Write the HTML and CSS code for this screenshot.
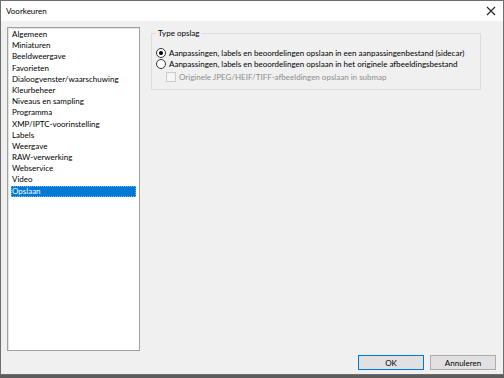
FILE: index.html
```html
<!DOCTYPE html>
<html lang="nl">
<head>
  <meta charset="UTF-8">
  <meta name="viewport" content="width=device-width, initial-scale=1.0">
  <title>Voorkeuren</title>
  <link rel="stylesheet" href="styles.css">
</head>
<body>
  <div class="window">
    <div class="titlebar">
      <span class="title">Voorkeuren</span>
      <svg class="close" width="10" height="10" viewBox="0 0 10 10">
        <path d="M1 1L9 9M9 1L1 9" stroke="#222" stroke-width="1.1"/>
      </svg>
    </div>
    <div class="content">
      <ul class="category-list">
        <li>Algemeen</li>
        <li>Miniaturen</li>
        <li>Beeldweergave</li>
        <li>Favorieten</li>
        <li>Dialoogvenster/waarschuwing</li>
        <li>Kleurbeheer</li>
        <li>Niveaus en sampling</li>
        <li>Programma</li>
        <li>XMP/IPTC-voorinstelling</li>
        <li>Labels</li>
        <li>Weergave</li>
        <li>RAW-verwerking</li>
        <li>Webservice</li>
        <li>Video</li>
        <li class="selected">Opslaan</li>
      </ul>
      <div class="panel">
        <fieldset class="group">
          <legend>Type opslag</legend>
          <label class="option">
            <span class="radio checked"></span>
            Aanpassingen, labels en beoordelingen opslaan in een aanpassingenbestand (sidecar)
          </label>
          <label class="option">
            <span class="radio"></span>
            Aanpassingen, labels en beoordelingen opslaan in het originele afbeeldingsbestand
          </label>
          <label class="option sub disabled">
            <span class="checkbox"></span>
            Originele JPEG/HEIF/TIFF-afbeeldingen opslaan in submap
          </label>
        </fieldset>
      </div>
    </div>
    <div class="footer">
      <button class="btn default">OK</button>
      <button class="btn">Annuleren</button>
    </div>
  </div>
</body>
</html>
```

FILE: styles.css
```css
body {
  margin: 0;
  background: #5c5c5c;
  font-family: Lato, "Noto Sans", sans-serif;
  font-size: 8px;
  color: #000;
}

.window {
  width: 502px;
  height: 373px;
  border: 1px solid #6e6e6e;
  background: #f0f0f0;
  display: flex;
  flex-direction: column;
}

.titlebar {
  height: 20px;
  background: #fff;
  display: flex;
  align-items: center;
  justify-content: space-between;
  padding: 0 6px 0 5px;
}

.title {
  font-size: 8px;
}

.close {
  margin-right: 1px;
}

.content {
  flex: 1;
  display: flex;
  padding: 6px 6px 0 6px;
  gap: 11px;
  min-height: 0;
}

.category-list {
  flex-shrink: 0;
  list-style: none;
  margin: 0;
  padding: 1px 3px 2px;
  width: 125px;
  height: 319px;
  background: #fff;
  border: 1px solid #a0a0a0;
  box-shadow: inset 1px 1px 0 #e3e3e3;
}

.category-list li {
  height: 11.2px;
  line-height: 11.2px;
  padding-left: 1px;
  white-space: nowrap;
}

.category-list li.selected {
  background: #0078d7;
  color: #fff;
  outline: 1px dotted #7fb6e8;
  outline-offset: -1px;
}

.panel {
  flex: 1;
  min-width: 0;
  padding-top: 1px;
  padding-right: 16px;
}

.group {
  margin: 0;
  padding: 9px 6px 6px 4px;
  border: 1px solid #dcdcdc;
  border-radius: 0;
}

.group legend {
  padding: 0 2px;
  margin-left: 0;
}

.option {
  display: flex;
  align-items: center;
  height: 11.5px;
  gap: 3px;
  white-space: nowrap;
}

.option.sub {
  padding-left: 10px;
  margin-top: 1px;
}

.option.disabled {
  color: #8d8d8d;
}

.radio {
  width: 8px;
  height: 8px;
  border: 1px solid #333;
  border-radius: 50%;
  background: #fff;
  position: relative;
  flex-shrink: 0;
}

.radio.checked::after {
  content: "";
  position: absolute;
  left: 2px;
  top: 2px;
  width: 4px;
  height: 4px;
  border-radius: 50%;
  background: #000;
}

.checkbox {
  width: 8px;
  height: 8px;
  border: 1px solid #cccccc;
  background: #f6f6f6;
  flex-shrink: 0;
}

.footer {
  display: flex;
  justify-content: flex-end;
  gap: 6px;
  padding: 5px 7px 4px 0;
}

.btn {
  width: 66px;
  height: 15px;
  padding: 0;
  font-family: inherit;
  font-size: 8px;
  background: #e1e1e1;
  border: 1px solid #adadad;
  color: #000;
}

.btn.default {
  border-color: #0078d7;
  box-shadow: inset 0 0 0 1px #e1e1e1;
}
```
